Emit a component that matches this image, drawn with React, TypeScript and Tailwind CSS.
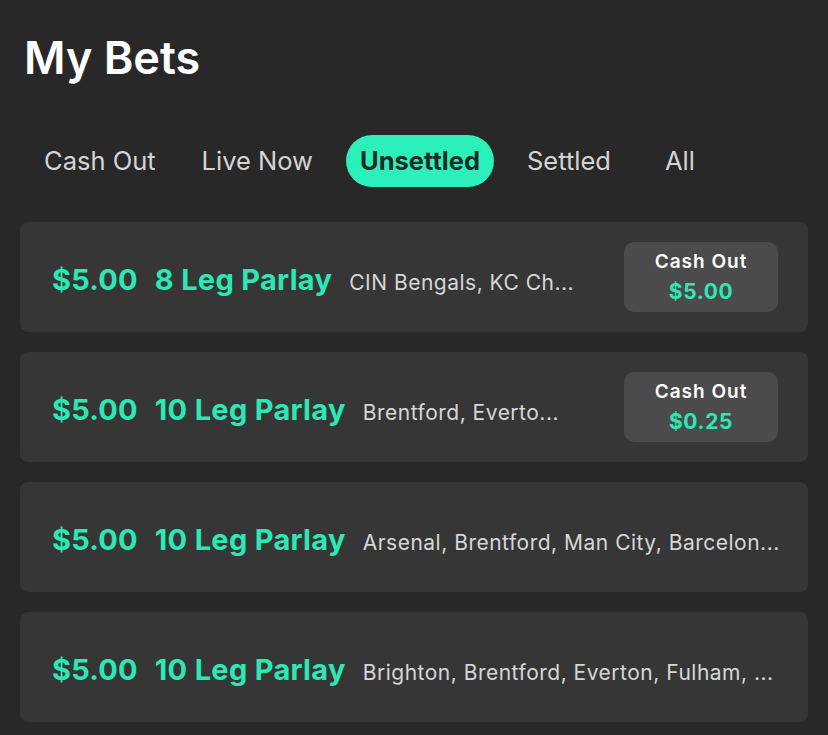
const tabs = ['Cash Out', 'Live Now', 'Unsettled', 'Settled', 'All']

interface Bet {
  stake: string
  title: string
  legs: string
  cashOut?: string
}

const bets: Bet[] = [
  { stake: '$5.00', title: '8 Leg Parlay', legs: 'CIN Bengals, KC Ch...', cashOut: '$5.00' },
  { stake: '$5.00', title: '10 Leg Parlay', legs: 'Brentford, Everto...', cashOut: '$0.25' },
  { stake: '$5.00', title: '10 Leg Parlay', legs: 'Arsenal, Brentford, Man City, Barcelon...' },
  { stake: '$5.00', title: '10 Leg Parlay', legs: 'Brighton, Brentford, Everton, Fulham, ...' },
]

function BetCard({ bet }: { bet: Bet }) {
  return (
    <div className="flex h-[110px] items-center rounded-lg bg-[#363636] pl-8 pr-[30px]">
      <div className="mt-[6px] flex min-w-0 flex-1 items-baseline">
        <span className="shrink-0 text-[29px] font-bold tracking-[0.2px] text-[#2de8b3]">{bet.stake}</span>
        <span className="ml-[17px] shrink-0 text-[29px] font-bold tracking-[0.3px] text-[#2de8b3]">
          {bet.title}
        </span>
        <span className="ml-[17px] min-w-0 flex-1 whitespace-nowrap text-[21px] tracking-[0.5px] text-[#d6d6d6]">
          {bet.legs}
        </span>
      </div>
      {bet.cashOut && (
        <div className="ml-4 flex h-[70px] w-[154px] shrink-0 flex-col items-center justify-center gap-[2px] rounded-[10px] bg-[#4b4b4b] leading-[28px]">
          <span className="text-[19px] font-semibold tracking-[1px] text-white">Cash Out</span>
          <span className="text-[21px] font-bold tracking-[0.6px] text-[#2de8b3]">{bet.cashOut}</span>
        </div>
      )}
    </div>
  )
}

export default function App() {
  return (
    <div
      className="min-h-[735px] bg-[#282828] px-5 pt-[31px]"
      style={{ fontFamily: 'Inter, "Noto Sans", sans-serif' }}
    >
      <h1 className="ml-[4px] text-[45px] font-semibold leading-[1.2] text-white">My Bets</h1>

      <div className="mt-[50px] flex items-center gap-5 pl-[11px]">
        {tabs.map((t) =>
          t === 'Unsettled' ? (
            <span
              key={t}
              className="flex h-[52px] items-center rounded-full bg-[#2cf0b9] px-[14px] text-[25.5px] font-bold text-[#1f2b27]"
            >
              {t}
            </span>
          ) : (
            <span
              key={t}
              className={t === 'All' ? 'ml-2 px-[13px] text-[25.5px] text-[#d4d4d4]' : 'px-[13px] text-[25.5px] text-[#d4d4d4]'}
            >
              {t}
            </span>
          )
        )}
      </div>

      <div className="mt-[35px] flex flex-col gap-5">
        {bets.map((b, i) => (
          <BetCard key={i} bet={b} />
        ))}
      </div>
    </div>
  )
}
